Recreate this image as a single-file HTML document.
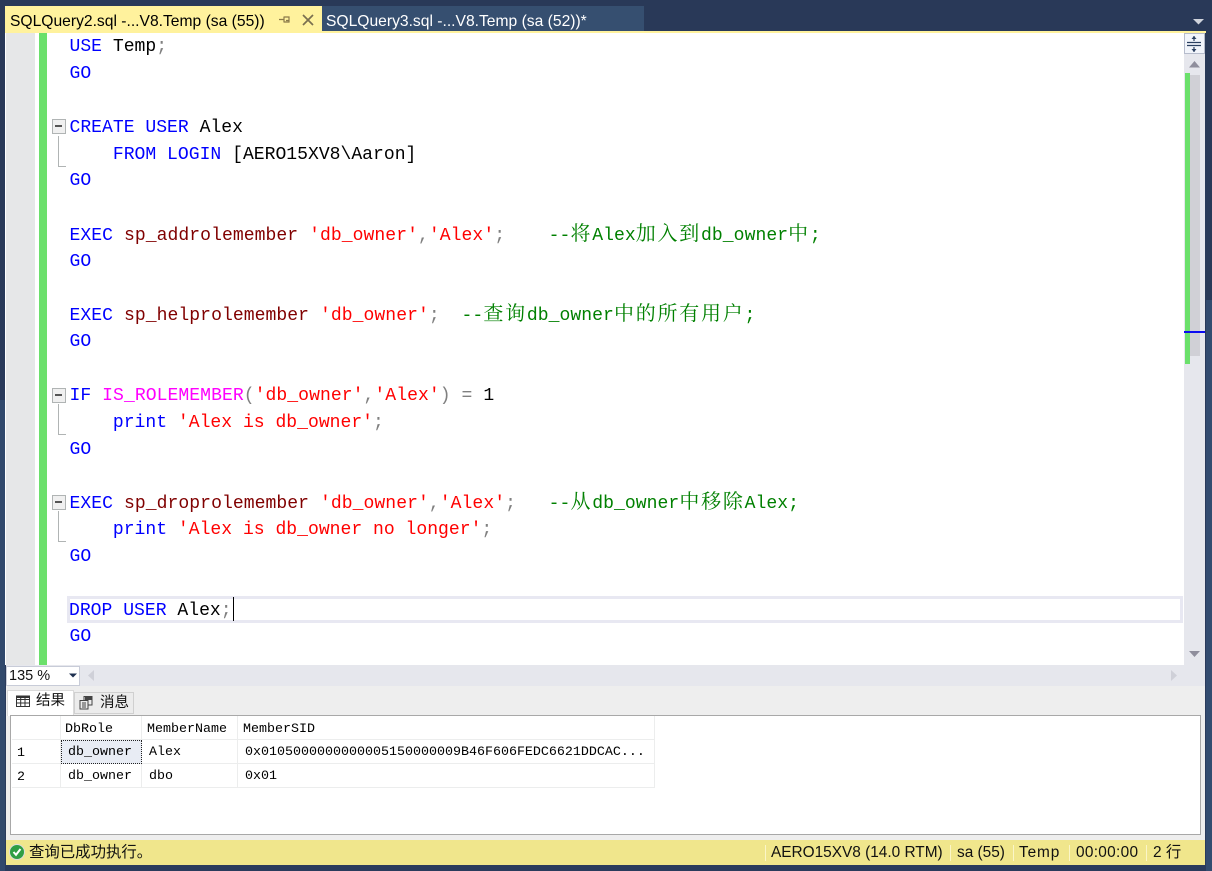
<!DOCTYPE html>
<html><head><meta charset="utf-8"><style>
html,body{margin:0;padding:0}
body{width:1212px;height:871px;overflow:hidden;position:relative;background:#2a3a58;font-family:"Liberation Sans","Noto Sans CJK SC",sans-serif}
div,span.a{position:absolute}
.l{left:69.5px;height:27px;line-height:27px;margin-top:2px;font-family:"Liberation Mono","Noto Serif CJK SC",monospace;font-size:18.07px;white-space:pre;color:#000}
.w{letter-spacing:.05px}
.k{color:#0000ff}.s{color:#ff0000}.c{color:#008000}.m{color:#ff00ff}.g{color:#808080}.d{color:#800000}
.z{font-family:"Noto Serif CJK SC",serif;font-size:20px;letter-spacing:1.75px;line-height:0}
.b{left:52px;width:14px;height:15px;box-sizing:border-box;border:1.5px solid #b0b4b4;background:#f0f0f0}
.b:after{content:"";position:absolute;left:2px;top:5px;width:7px;height:1.5px;background:#555}
.v{left:58px;width:8px;box-sizing:border-box;border-left:1.5px solid #b0b4b4;border-bottom:1.5px solid #b0b4b4}
.t{font-size:15.65px;height:25px;line-height:25px;white-space:pre}
.h{background:#eceded;height:1px}
.vl{background:#eceded;width:1px}
.q{font-family:"Liberation Mono","Noto Serif CJK SC",monospace;font-size:13.33px;height:24px;line-height:24px;margin-top:2px;white-space:pre;color:#000}
.st{font-size:15.4px;top:840px;height:25px;line-height:25px;color:#111;white-space:pre}
.sp{top:845px;width:1px;height:16px;background:#fbf6c8}
</style></head><body>
<div style="left:0;top:0;width:1212px;height:871px;background:linear-gradient(#293958,#2a3b5c)"></div>
<div style="left:0;top:400px;width:5px;height:471px;background:#31496c"></div>
<div style="left:1206px;top:300px;width:6px;height:571px;background:#334c70"></div>
<!-- tabs -->
<div style="left:322px;top:6px;width:322px;height:25px;background:#364f70"></div>
<div style="left:5px;top:6px;width:317px;height:27px;background:#fff29d"></div>
<div class="t" style="left:10px;top:9px;color:#000">SQLQuery2.sql -...V8.Temp (sa (55))</div>
<div class="t" style="left:326px;top:9px;color:#fff">SQLQuery3.sql -...V8.Temp (sa (52))*</div>
<svg style="position:absolute;left:278px;top:12px" width="40" height="16"><path d="M1 7.5H6M6 4.5V10.5M6 5H11V10H6M8 8.5H11" fill="none" stroke="#8a7a4a" stroke-width="1.2"/><path d="M25 3L35 13M35 3L25 13" stroke="#7a6f50" stroke-width="1.7"/></svg>
<svg style="position:absolute;left:1192px;top:18px" width="14" height="8"><path d="M1 1H12L6.5 6.5Z" fill="#d0d4dc"/></svg>
<div style="left:5px;top:31px;width:1201px;height:2px;background:#fff29d"></div>
<!-- editor -->
<div style="left:5px;top:33px;width:1200px;height:632px;background:#fff"></div>
<div style="left:6px;top:33px;width:29px;height:632px;background:#e6e7e8"></div>
<div style="left:39px;top:33px;width:8px;height:632px;background:#6be06b"></div>
<!-- current line -->
<div style="left:67px;top:596px;width:1116px;height:27px;box-sizing:border-box;border:3px solid #e8e8f2;background:#fff"></div>
<div style="left:233px;top:597px;width:1px;height:24px;background:#000"></div>
<!-- outline -->
<div class="b" style="top:119px"></div><div class="v" style="top:136px;height:31px"></div>
<div class="b" style="top:388px"></div><div class="v" style="top:404px;height:31px"></div>
<div class="b" style="top:495px"></div><div class="v" style="top:511px;height:31px"></div>
<!-- code -->
<div class="l" style="top:32px"><span class="k">USE</span> Temp<span class="g">;</span></div>
<div class="l k" style="top:59px">GO</div>
<div class="l" style="top:113px"><span class="k">CREATE USER</span> Alex</div>
<div class="l" style="top:140px">    <span class="k">FROM LOGIN</span> [AERO15XV8\Aaron]</div>
<div class="l k" style="top:166px">GO</div>
<div class="l w" style="top:221px"><span class="k">EXEC</span> <span class="d">sp_addrolemember</span> <span class="s">'db_owner'</span><span class="g">,</span><span class="s">'Alex'</span><span class="g">;</span>    <span class="c">--<span class="z">将</span>Alex<span class="z">加入到</span>db_owner<span class="z">中</span>;</span></div>
<div class="l k" style="top:247px">GO</div>
<div class="l w" style="top:301px"><span class="k">EXEC</span> <span class="d">sp_helprolemember</span> <span class="s">'db_owner'</span><span class="g">;</span>  <span class="c">--<span class="z">查询</span>db_owner<span class="z">中的所有用户</span>;</span></div>
<div class="l k" style="top:327px">GO</div>
<div class="l w" style="top:381px"><span class="k">IF</span> <span class="m">IS_ROLEMEMBER</span><span class="g">(</span><span class="s">'db_owner'</span><span class="g">,</span><span class="s">'Alex'</span><span class="g">) =</span> 1</div>
<div class="l" style="top:408px">    <span class="k">print</span> <span class="s">'Alex is db_owner'</span><span class="g">;</span></div>
<div class="l k" style="top:435px">GO</div>
<div class="l w" style="top:489px"><span class="k">EXEC</span> <span class="d">sp_droprolemember</span> <span class="s">'db_owner'</span><span class="g">,</span><span class="s">'Alex'</span><span class="g">;</span>   <span class="c">--<span class="z">从</span>db_owner<span class="z">中移除</span>Alex;</span></div>
<div class="l" style="top:515px">    <span class="k">print</span> <span class="s">'Alex is db_owner no longer'</span><span class="g">;</span></div>
<div class="l k" style="top:542px">GO</div>
<div class="l" style="top:596px;left:69px"><span class="k">DROP USER</span> Alex<span class="g">;</span></div>
<div class="l k" style="top:622px">GO</div>
<!-- right scrollbar -->
<div style="left:1184px;top:33px;width:21px;height:632px;background:#e6e7ed"></div>
<div style="left:1184px;top:33px;width:21px;height:21px;box-sizing:border-box;border:1px solid #b6bccc;background:#f2f5fb"></div>
<svg style="position:absolute;left:1186px;top:35px" width="18" height="18"><path d="M1 7.5H15M1 10.5H15" stroke="#2a3f60" stroke-width="1.2"/><path d="M8 1V6M8 12V17" stroke="#2a3f60" stroke-width="1.2"/><path d="M5.5 4L8 1L10.5 4ZM5.5 14L8 17L10.5 14Z" fill="#2a3f60"/></svg>
<svg style="position:absolute;left:1188px;top:60px" width="14" height="8"><path d="M1 7.5L6.5 1L12 7.5Z" fill="#8f8e9c"/></svg>
<svg style="position:absolute;left:1188px;top:650px" width="14" height="8"><path d="M1 1H12L6.5 7Z" fill="#8f8e9c"/></svg>
<div style="left:1190px;top:75px;width:10px;height:281px;background:#d0d0d6"></div>
<div style="left:1185px;top:73px;width:5px;height:291px;background:#6be06b"></div>
<div style="left:1184px;top:331px;width:21px;height:2px;background:#0b0bf0"></div>
<!-- zoom / h scrollbar -->
<div style="left:6px;top:665px;width:1199px;height:21px;background:#e6e7ed"></div>
<div style="left:6px;top:666px;width:74px;height:20px;box-sizing:border-box;border:1px solid #c8ccd8;background:#fff"></div>
<div style="left:9px;top:666px;height:20px;line-height:20px;font-size:14.5px;color:#111">135 %</div>
<svg style="position:absolute;left:69px;top:673px" width="10" height="6"><path d="M0 0.5H8L4 4.5Z" fill="#1e3050"/></svg>
<svg style="position:absolute;left:87px;top:670px" width="8" height="12"><path d="M7 0V11L1 5.5Z" fill="#cfd0d8"/></svg>
<svg style="position:absolute;left:1170px;top:670px" width="8" height="12"><path d="M1 0V11L7 5.5Z" fill="#cfd0d8"/></svg>
<!-- results panel -->
<div style="left:6px;top:686px;width:1199px;height:154px;background:#eeeeee"></div>
<div style="left:74px;top:692px;width:60px;height:22px;box-sizing:border-box;border:1px solid #d0d0d0;background:#ececec"></div>
<div style="left:7px;top:690px;width:67px;height:26px;background:#fff;border:1px solid #dadada;border-bottom:none;box-sizing:border-box"></div>
<svg style="position:absolute;left:16px;top:695px" width="14" height="13"><path d="M0.5 1.5H13.5V11.5H0.5ZM0.5 4.5H13.5M0.5 8H13.5M4.7 1.5V11.5M9 1.5V11.5" fill="none" stroke="#333" stroke-width="1"/><path d="M0 0.5H14V3H0Z" fill="#333"/></svg>
<div style="left:36px;top:691px;height:20px;line-height:20px;font-size:14.5px;color:#111">结果</div>
<svg style="position:absolute;left:79px;top:695px" width="15" height="15"><path d="M1 5.5H9V14H1ZM3 8H7M3 10H7M3 12H7M5 5V1.5H13V10H9.5" fill="none" stroke="#444" stroke-width="1"/><path d="M6 2H13V5H6Z" fill="#444"/></svg>
<div style="left:100px;top:693px;height:20px;line-height:20px;font-size:14.5px;color:#111">消息</div>
<!-- grid -->
<div style="left:10px;top:715px;width:1191px;height:120px;box-sizing:border-box;border:1px solid #a8a8a8;background:#fff"></div>
<div class="h" style="left:12px;top:739px;width:642px"></div>
<div class="h" style="left:12px;top:763px;width:642px"></div>
<div class="h" style="left:12px;top:787px;width:642px"></div>
<div class="vl" style="left:60px;top:716px;height:72px"></div>
<div class="vl" style="left:141px;top:716px;height:72px"></div>
<div class="vl" style="left:237px;top:716px;height:72px"></div>
<div class="vl" style="left:654px;top:716px;height:72px"></div>
<div style="left:61px;top:740px;width:81px;height:24px;box-sizing:border-box;border:1px dotted #222;background:#e8ecf4"></div>
<div class="q" style="left:65px;top:716px">DbRole</div>
<div class="q" style="left:147px;top:716px">MemberName</div>
<div class="q" style="left:243px;top:716px">MemberSID</div>
<div class="q" style="left:17px;top:740px">1</div>
<div class="q" style="left:68px;top:739px">db_owner</div>
<div class="q" style="left:149px;top:739px">Alex</div>
<div class="q" style="left:245px;top:739px">0x0105000000000005150000009B46F606FEDC6621DDCAC...</div>
<div class="q" style="left:17px;top:764px">2</div>
<div class="q" style="left:68px;top:763px">db_owner</div>
<div class="q" style="left:149px;top:763px">dbo</div>
<div class="q" style="left:245px;top:763px">0x01</div>
<!-- status -->
<div style="left:6px;top:840px;width:1199px;height:25px;background:#f0e68c"></div>
<svg style="position:absolute;left:9px;top:844px" width="16" height="16"><circle cx="8" cy="8" r="7.5" fill="#2f9e44"/><circle cx="8" cy="8" r="7.5" fill="none" stroke="#ddd" stroke-width="1"/><path d="M4.5 8L7 10.8L11.5 5" fill="none" stroke="#fff" stroke-width="2"/></svg>
<div class="st" style="left:29px">查询已成功执行。</div>
<div class="sp" style="left:765px"></div><div class="sp" style="left:950px"></div><div class="sp" style="left:1013px"></div><div class="sp" style="left:1069px"></div><div class="sp" style="left:1146px"></div>
<div class="st" style="left:771px">AERO15XV8 (14.0 RTM)</div>
<div class="st" style="left:957px">sa (55)</div>
<div class="st" style="left:1019px;letter-spacing:.9px">Temp</div>
<div class="st" style="left:1076px;letter-spacing:.3px">00:00:00</div>
<div class="st" style="left:1153px">2 行</div>
</body></html>
